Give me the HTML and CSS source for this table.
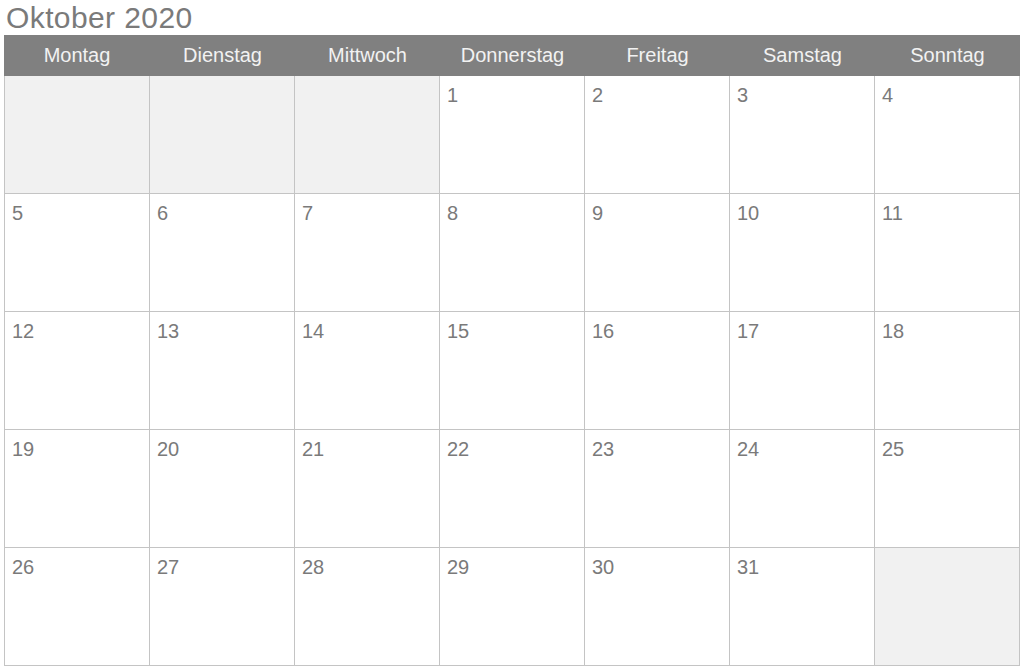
FILE: index.html
```html
<!DOCTYPE html>
<html lang="de">
<head>
<meta charset="utf-8">
<title>Oktober 2020</title>
<link rel="stylesheet" href="styles.css">
</head>
<body>
<div class="page">
  <h1 class="title">Oktober 2020</h1>
  <div class="cal">
    <div class="head">Montag</div>
    <div class="head">Dienstag</div>
    <div class="head">Mittwoch</div>
    <div class="head">Donnerstag</div>
    <div class="head">Freitag</div>
    <div class="head">Samstag</div>
    <div class="head">Sonntag</div>

    <div class="cell empty"></div>
    <div class="cell empty"></div>
    <div class="cell empty"></div>
    <div class="cell">1</div>
    <div class="cell">2</div>
    <div class="cell">3</div>
    <div class="cell">4</div>

    <div class="cell">5</div>
    <div class="cell">6</div>
    <div class="cell">7</div>
    <div class="cell">8</div>
    <div class="cell">9</div>
    <div class="cell">10</div>
    <div class="cell">11</div>

    <div class="cell">12</div>
    <div class="cell">13</div>
    <div class="cell">14</div>
    <div class="cell">15</div>
    <div class="cell">16</div>
    <div class="cell">17</div>
    <div class="cell">18</div>

    <div class="cell">19</div>
    <div class="cell">20</div>
    <div class="cell">21</div>
    <div class="cell">22</div>
    <div class="cell">23</div>
    <div class="cell">24</div>
    <div class="cell">25</div>

    <div class="cell">26</div>
    <div class="cell">27</div>
    <div class="cell">28</div>
    <div class="cell">29</div>
    <div class="cell">30</div>
    <div class="cell">31</div>
    <div class="cell empty"></div>
  </div>
</div>
</body>
</html>
```
FILE: styles.css
```css
html, body {
  margin: 0;
  padding: 0;
  background: #ffffff;
}
body {
  font-family: "Liberation Sans", Arial, sans-serif;
}
.page {
  padding: 0 3px 0 4px;
}
.title {
  margin: 0;
  padding-left: 2px;
  height: 35px;
  font-weight: normal;
  font-size: 30px;
  letter-spacing: 0.4px;
  line-height: 36px;
  color: #7a7a7a;
}
.cal {
  width: 1016px;
  display: grid;
  grid-template-columns: repeat(7, 1fr);
  grid-template-rows: 40px repeat(5, 117px);
  gap: 1px;
  background: #c4c4c4;
  border-right: 1px solid #c4c4c4;
  border-bottom: 1px solid #c4c4c4;
  border-left: 1px solid #c4c4c4;
  box-sizing: border-box;
}
.head {
  background: #808080;
  color: #f2f2f2;
  font-size: 20px;
  display: flex;
  align-items: center;
  justify-content: center;
  margin: 0 -1px -1px 0;
}
.head:first-child {
  margin-left: -1px;
}
.cell {
  background: #ffffff;
  color: #7a7a7a;
  font-size: 20px;
  line-height: 23px;
  padding: 8px 0 0 7px;
}
.cell.empty {
  background: #f1f1f1;
}
```
